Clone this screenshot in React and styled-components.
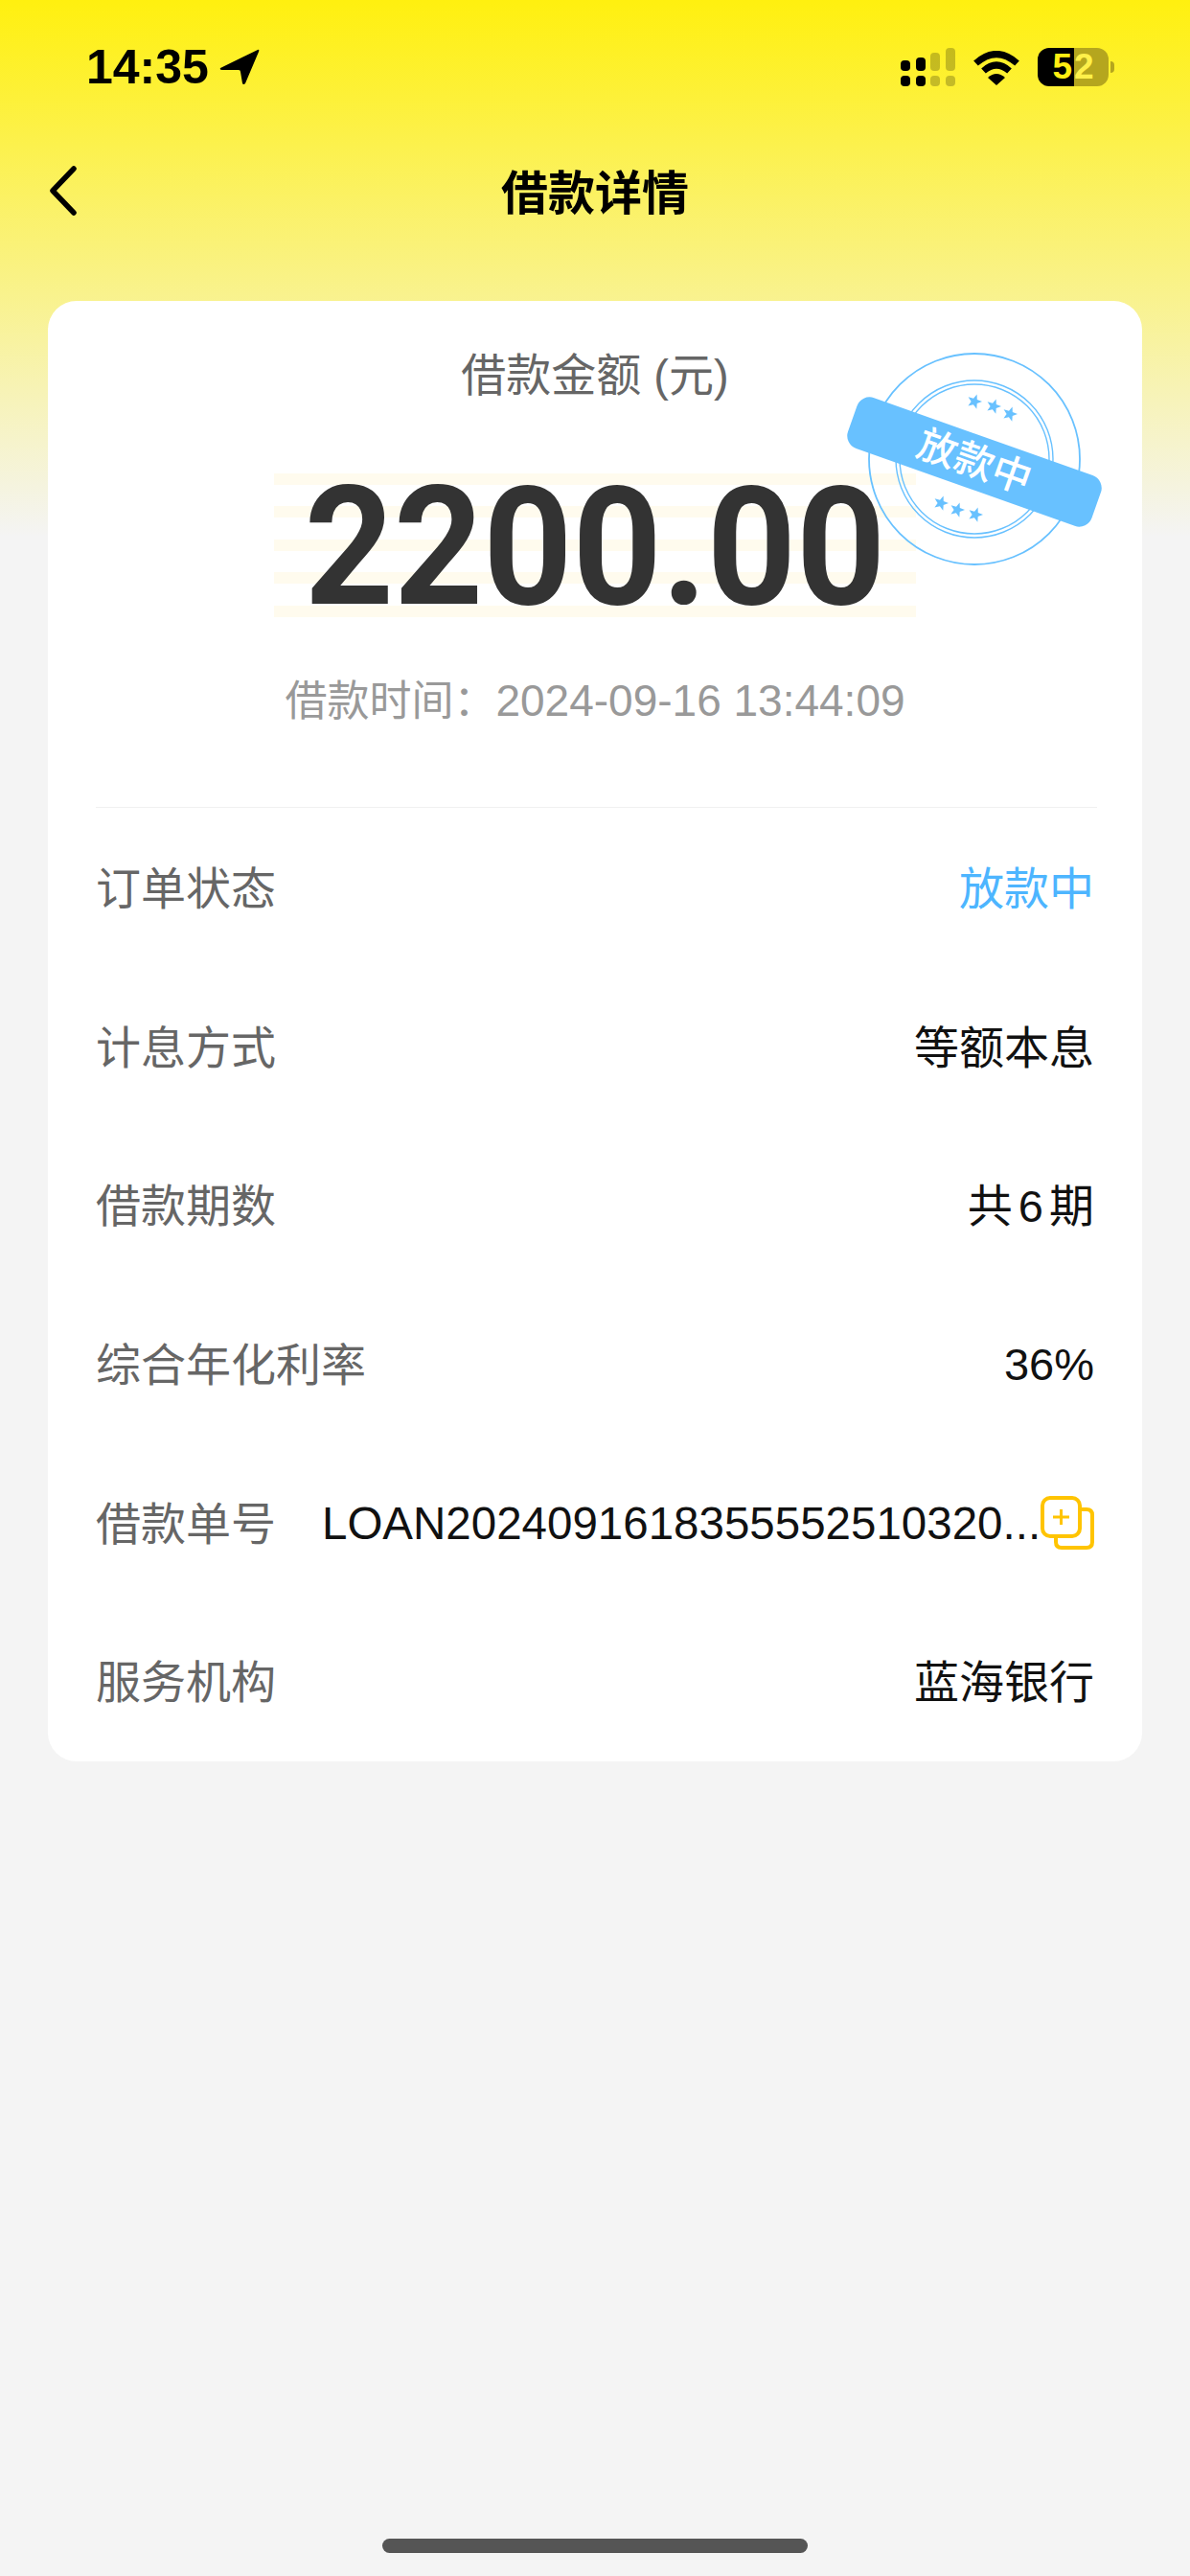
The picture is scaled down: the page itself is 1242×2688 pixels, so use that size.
import React from "react";
import styled, { createGlobalStyle } from "styled-components";

const Global = createGlobalStyle`
  html, body { margin: 0; padding: 0; background: #f4f4f4; }
  * { box-sizing: border-box; }
`;

const FONT = `"Liberation Sans", "Noto Sans CJK SC", sans-serif`;

const Page = styled.div`
  width: 1242px;
  height: 2688px;
  display: flex;
  flex-direction: column;
  font-family: ${FONT};
  background: linear-gradient(180deg, #fff00f 0, #f4f4f4 560px, #f4f4f4 100%);
`;

const StatusBar = styled.div`
  height: 140px;
  padding: 50px 85px 0 90px;
  display: flex;
  justify-content: space-between;
  align-items: flex-start;
`;

const TimeGroup = styled.div`
  display: flex;
  align-items: center;
  gap: 11px;
  height: 40px;
`;

const Clock = styled.span`
  font-size: 50px;
  font-weight: 700;
  color: #000;
  line-height: 40px;
`;

const StatusIcons = styled.div`
  display: flex;
  align-items: flex-start;
  gap: 19px;
`;

const Battery = styled.div`
  position: relative;
  width: 74px;
  height: 40px;
  border-radius: 12px;
  display: flex;
  background: linear-gradient(90deg, #000 0, #000 38px, #b5a61e 38px, #b5a61e 100%);
  justify-content: center;
  align-items: center;
  gap: 2px;
  font-size: 37px;
  font-weight: 700;
  line-height: 40px;
`;

const BatteryDigit = styled.span`
  color: ${(p) => (p.$light ? "#fff04a" : "#ffee12")};
`;

const BatteryNub = styled.i`
  position: absolute;
  right: -6px;
  top: 14px;
  width: 4px;
  height: 12px;
  border-radius: 0 4px 4px 0;
  background: #b5a61e;
`;

const NavBar = styled.div`
  height: 174px;
  padding: 33px 0 0 50px;
  display: grid;
  grid-template-columns: 1fr auto 1fr;
  align-items: start;
`;

const Title = styled.h1`
  margin: -1px 50px 0 0;
  font-size: 49px;
  line-height: 60px;
  font-weight: 700;
  color: #000;
`;

const Card = styled.section`
  position: relative;
  margin: 0 50px;
  height: 1524px;
  background: #fff;
  border-radius: 30px;
`;

const Summary = styled.div`
  margin: 0 47px 0 50px;
  height: 529px;
  border-bottom: 1px solid #f1f1f1;
  display: flex;
  flex-direction: column;
  align-items: center;
  padding-right: 3px;
`;

const AmountLabel = styled.div`
  margin-top: 50px;
  font-size: 47px;
  line-height: 56px;
  color: #666;
`;

const Amount = styled.div`
  margin-top: 74px;
  width: 670px;
  height: 150px;
  padding-top: 4px;
  display: flex;
  align-items: center;
  justify-content: center;
  background: repeating-linear-gradient(180deg, #fffbee 0, #fffbee 12px, #fff 12px, #fff 34.4px);
`;

const AmountValue = styled.span`
  font-family: Roboto, sans-serif;
  font-size: 172px;
  font-weight: 700;
  color: #333;
  line-height: 146px;
  transform: scaleX(0.945);
`;

const LoanTime = styled.div`
  margin-top: 59px;
  font-size: 46px;
  line-height: 56px;
  color: #999;
  white-space: pre;
`;

const TimeLabel = styled.span`
  font-size: 44px;
`;

const Rows = styled.div`
  margin-top: -2px;
  padding: 0 50px 0 50px;
`;

const Row = styled.div`
  height: 165.6px;
  display: flex;
  align-items: center;
  justify-content: space-between;
  font-size: 47px;
  gap: 48px;
`;

const RowLabel = styled.span`
  flex: none;
  color: #666;
`;

const RowValue = styled.span`
  color: ${(p) => (p.$accent ? "#4db5ff" : "#111")};
  white-space: nowrap;
  word-spacing: -7px;
  padding-top: ${(p) => (p.$latin ? "6px" : "0")};
`;

const OrderGroup = styled.div`
  flex: 1;
  min-width: 0;
  display: flex;
  align-items: center;
  justify-content: space-between;
`;

const OrderNo = styled.span`
  color: #111;
  font-size: 47.5px;
  white-space: nowrap;
  padding-top: 6px;
`;

const CopyIcon = styled.svg`
  flex: none;
  margin-top: 6px;
`;

const Stamp = styled.div`
  position: absolute;
  left: 856px;
  top: 54px;
  width: 222px;
  height: 222px;
`;

const Banner = styled.div`
  position: absolute;
  left: -24px;
  top: 86px;
  width: 270px;
  height: 56px;
  border-radius: 14px;
  background: #68c1ff;
  color: #fff;
  font-size: 41px;
  font-weight: 500;
  line-height: 56px;
  text-align: center;
  transform: rotate(19.5deg);
`;

const HomeBar = styled.div`
  width: 444px;
  height: 15px;
  margin: auto auto 24px;
  border-radius: 8px;
  background: #555;
`;

const star = (cx, cy, rot, r = 8) => {
  const pts = [];
  for (let i = 0; i < 10; i++) {
    const rad = i % 2 ? r * 0.42 : r;
    const a = ((rot + i * 36 - 90) * Math.PI) / 180;
    pts.push(`${(cx + rad * Math.cos(a)).toFixed(1)},${(cy + rad * Math.sin(a)).toFixed(1)}`);
  }
  return pts.join(" ");
};

const STARS = [
  [111, 51], [131, 56], [148, 64],
  [76, 157], [93, 164], [112, 169],
];

const rows = [
  ["订单状态", "放款中", true],
  ["计息方式", "等额本息"],
  ["借款期数", "共 6 期"],
  ["综合年化利率", "36%", false, true],
];

export default function App() {
  return (
    <Page>
      <Global />
      <StatusBar>
        <TimeGroup>
          <Clock>14:35</Clock>
          <svg width="42" height="38" viewBox="0 0 42 38">
            <path d="M40 1 L1 20 Q0 22 3 22 L20 22 Q22 22 22 24 L24 36 Q25 38 27 36 L41 3 Q42 0 40 1 Z" fill="#000" />
          </svg>
        </TimeGroup>
        <StatusIcons>
          <svg width="57" height="40" viewBox="0 0 57 40">
            <g fill="#000">
              <rect x="0" y="13" width="10" height="11" rx="4" />
              <rect x="16" y="10" width="10" height="14" rx="4" />
              <rect x="0" y="29" width="10" height="11" rx="4" />
              <rect x="16" y="29" width="10" height="11" rx="4" />
            </g>
            <g fill="#000" opacity="0.22">
              <rect x="31" y="5" width="10" height="19" rx="4" />
              <rect x="47" y="0" width="10" height="24" rx="4" />
              <rect x="31" y="29" width="10" height="11" rx="4" />
              <rect x="47" y="29" width="10" height="11" rx="4" />
            </g>
          </svg>
          <svg width="48" height="36" viewBox="0 0 48 36" style={{ marginTop: 3 }}>
            <g fill="none" stroke="#000" strokeWidth="7">
              <path d="M2.5 13 Q24 -6 45.5 13" />
              <path d="M10.5 21 Q24 9 37.5 21" />
            </g>
            <path d="M15 28 Q24 20 33 28 L24 36 Z" fill="#000" />
          </svg>
          <Battery>
            <BatteryDigit>5</BatteryDigit>
            <BatteryDigit $light>2</BatteryDigit>
            <BatteryNub />
          </Battery>
        </StatusIcons>
      </StatusBar>
      <NavBar>
        <svg width="32" height="52" viewBox="0 0 32 52">
          <path d="M27 3 L5 26 L27 49" fill="none" stroke="#000" strokeWidth="5.5" strokeLinecap="round" strokeLinejoin="round" />
        </svg>
        <Title>借款详情</Title>
      </NavBar>
      <Card>
        <Summary>
          <AmountLabel>借款金额 (元)</AmountLabel>
          <Amount><AmountValue>2200.00</AmountValue></Amount>
          <LoanTime><TimeLabel>借款时间：</TimeLabel>2024-09-16 13:44:09</LoanTime>
        </Summary>
        <Rows>
          {rows.map(([label, value, accent, latin]) => (
            <Row key={label}>
              <RowLabel>{label}</RowLabel>
              <RowValue $accent={accent} $latin={latin}>{value}</RowValue>
            </Row>
          ))}
          <Row>
            <RowLabel>借款单号</RowLabel>
            <OrderGroup>
              <OrderNo>LOAN2024091618355552510320...</OrderNo>
              <CopyIcon width="56" height="56" viewBox="0 0 56 56">
                <g fill="none" stroke="#ffc400" strokeWidth="4">
                  <path d="M41 14 H48 Q54 14 54 20 V48 Q54 54 48 54 H22 Q16 54 16 48 V42" strokeLinecap="round" />
                  <rect x="2" y="2" width="39" height="40" rx="8" />
                  <path d="M13 22 H30 M21.5 14 V30" strokeWidth="3" />
                </g>
              </CopyIcon>
            </OrderGroup>
          </Row>
          <Row>
            <RowLabel>服务机构</RowLabel>
            <RowValue>蓝海银行</RowValue>
          </Row>
        </Rows>
        <Stamp>
          <svg width="222" height="222" viewBox="0 0 222 222">
            <g fill="none" stroke="#68c1ff">
              <circle cx="111" cy="111" r="110" strokeWidth="1.8" />
              <circle cx="111" cy="111" r="82" strokeWidth="1.4" />
              <circle cx="111" cy="111" r="78" strokeWidth="1.4" />
            </g>
            {STARS.map(([x, y], i) => (
              <polygon key={i} points={star(x, y, 19)} fill="#68c1ff" />
            ))}
          </svg>
          <Banner>放款中</Banner>
        </Stamp>
      </Card>
      <HomeBar />
    </Page>
  );
}
